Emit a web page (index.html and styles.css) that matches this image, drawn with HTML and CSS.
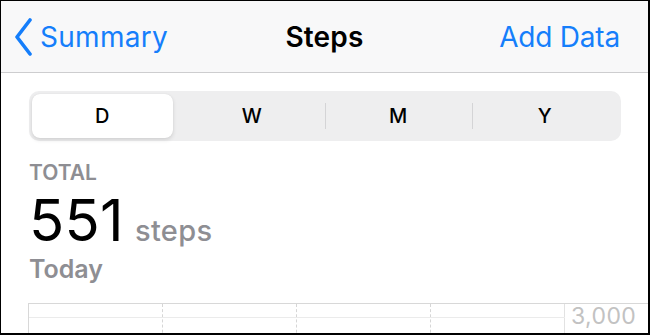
FILE: index.html
```html
<!DOCTYPE html>
<html lang="en">
<head>
  <meta charset="UTF-8">
  <title>Steps</title>
  <link rel="stylesheet" href="styles.css">
</head>
<body>

<div class="screen">
  <header class="nav">
    <a class="nav-back">
      <svg class="chevron" width="20" height="38" viewBox="0 0 20 38">
        <path d="M16 2 L3 19 L16 36"/>
      </svg>
      <span>Summary</span>
    </a>
    <h1 class="nav-title">Steps</h1>
    <a class="nav-action">Add Data</a>
  </header>

  <main class="content">
    <div class="segmented">
      <div class="segment selected">D</div>
      <div class="segment">W</div>
      <div class="segment sep">M</div>
      <div class="segment sep">Y</div>
    </div>

    <div class="total-label">TOTAL</div>
    <div class="total">
      <span class="total-value">551</span>
      <span class="total-unit">steps</span>
    </div>
    <div class="total-date">Today</div>

    <div class="chart">
      <div class="plot">
        <div class="col"></div>
        <div class="col"></div>
        <div class="col"></div>
        <div class="col last"></div>
      </div>
      <div class="axis">3,000</div>
    </div>
  </main>
</div>

</body>
</html>
```

FILE: styles.css
```css
* {
  margin: 0;
  padding: 0;
  box-sizing: border-box;
}
body {
  font-family: Inter, "Liberation Sans", sans-serif;
  background: #000;
}
.screen {
  width: 650px;
  height: 335px;
  border-style: solid;
  border-color: #000;
  border-width: 1px 2px 2px 1px;
  background: #fff;
  overflow: hidden;
}
.nav {
  height: 72px;
  background: #f8f8f9;
  border-bottom: 1px solid #cdcdcf;
  display: grid;
  grid-template-columns: 1fr auto 1fr;
  align-items: center;
  padding: 0 28px;
}
.nav-back, .nav-action {
  color: #157efb;
  font-size: 28px;
}
.nav-back {
  display: flex;
  align-items: center;
  gap: 6px;
  margin-left: -15px;
  letter-spacing: 0.3px;
}
.chevron path {
  fill: none;
  stroke: #157efb;
  stroke-width: 3.6;
  stroke-linecap: round;
  stroke-linejoin: round;
}
.nav-title {
  font-size: 28px;
  font-weight: 600;
  color: #000;
  letter-spacing: 0.2px;
}
.nav-action {
  justify-self: end;
  letter-spacing: -0.2px;
}
.content {
  padding: 18px 27px 0 28px;
}
.segmented {
  height: 50px;
  background: #eeeeef;
  border-radius: 10px;
  padding: 3px;
  display: grid;
  grid-template-columns: repeat(4, 1fr);
}
.segment {
  display: flex;
  align-items: center;
  justify-content: center;
  font-size: 20px;
  font-weight: 500;
  color: #000;
  position: relative;
}
.segment.selected {
  background: #fff;
  border-radius: 8px;
  margin-right: 6px;
  box-shadow: 0 2px 4px rgba(0, 0, 0, 0.12), 0 0 1px rgba(0, 0, 0, 0.1);
}
.segment.sep::before {
  content: "";
  position: absolute;
  left: 0;
  top: 9px;
  bottom: 9px;
  width: 1px;
  background: #d4d4d6;
}
.total-label {
  margin-top: 20px;
  font-size: 21px;
  font-weight: 600;
  color: #8e8e93;
  line-height: 24px;
}
.total {
  display: flex;
  align-items: baseline;
  gap: 11px;
  line-height: 50px;
  margin-top: 10px;
}
.total-value {
  font-size: 58px;
  font-weight: 400;
  color: #000;
  letter-spacing: 0.3px;
}
.total-unit {
  font-size: 29px;
  font-weight: 500;
  color: #8e8e93;
  letter-spacing: 0.3px;
}
.total-date {
  font-size: 25px;
  font-weight: 600;
  color: #8e8e93;
  line-height: 26px;
}
.chart {
  margin: 21px -27px 0 -1px;
  height: 40px;
  border-top: 1px solid #d8d8d8;
  display: flex;
}
.plot {
  width: 537px;
  border-left: 1px solid #d8d8d8;
  display: grid;
  grid-template-columns: repeat(4, 1fr);
  position: relative;
}
.plot::after {
  content: "";
  position: absolute;
  left: 0;
  right: 0;
  top: 13px;
  height: 1px;
  background: #ebebeb;
}
.col {
  border-right: 1px dashed #d6d6d6;
}
.col.last {
  border-right: 1px solid #e2e2e2;
}
.axis {
  padding: 1px 0 0 6px;
  line-height: 22px;
  font-size: 23px;
  font-weight: 400;
  letter-spacing: 0.4px;
  color: #c2c2c2;
}
```
